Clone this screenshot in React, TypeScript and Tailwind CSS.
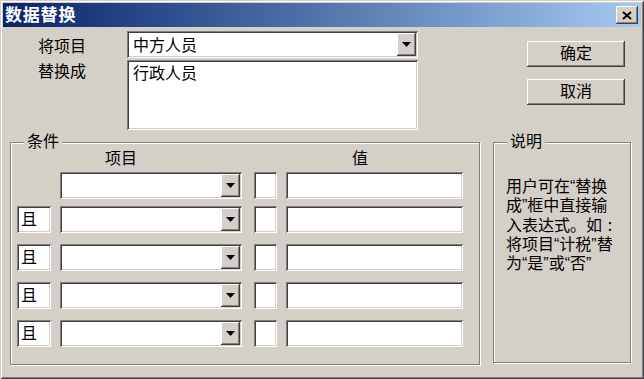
const sunken =
  'bg-white shadow-[inset_1px_1px_#808080,inset_-1px_-1px_#ffffff,inset_2px_2px_#404040,inset_-2px_-2px_#d4d0c8]'
const raised =
  'bg-[#d4d0c8] shadow-[inset_-1px_-1px_#404040,inset_1px_1px_#ffffff,inset_-2px_-2px_#808080,inset_2px_2px_#d4d0c8]'

function DropButton() {
  return (
    <div className={`${raised} w-[19px] h-full flex items-center justify-center`}>
      <svg width="9" height="5" viewBox="0 0 9 5">
        <path d="M0 0h9L4.5 5z" fill="#000" />
      </svg>
    </div>
  )
}

function Combo({ value = '', width }: { value?: string; width: string }) {
  return (
    <div className={`${sunken} ${width} flex h-[27px] p-[2px]`}>
      <div className="flex-1 flex items-center pl-[4px] pt-[2px] text-[16px] leading-none">{value}</div>
      <DropButton />
    </div>
  )
}

function GroupBox({ title, className, children }: { title: string; className: string; children?: React.ReactNode }) {
  return (
    <div className={`relative border border-[#808080] shadow-[inset_1px_1px_#ffffff,1px_1px_#ffffff] ${className}`}>
      <span className="absolute -top-[10px] left-[13px] bg-[#d4d0c8] px-[3px] text-[16px] leading-[18px]">{title}</span>
      {children}
    </div>
  )
}

function ConditionRow({ first = false, className = '' }: { first?: boolean; className?: string }) {
  return (
    <div className={`flex h-[27px] ${className}`}>
      {first ? (
        <div className="ml-[6px] w-[34px]" />
      ) : (
        <div className={`${sunken} ml-[6px] w-[34px] flex items-center pl-[4px] text-[16px] leading-none`}>且</div>
      )}
      <div className="ml-[9px]">
        <Combo width="w-[182px]" />
      </div>
      <div className={`${sunken} ml-[12px] w-[23px]`} />
      <div className={`${sunken} ml-[9px] w-[177px]`} />
    </div>
  )
}

export default function App() {
  return (
    <div className="w-[644px] h-[379px] bg-[#d4d0c8] p-[3px] flex flex-col text-black font-['Liberation_Sans','Noto_Sans_CJK_SC',sans-serif] shadow-[inset_1px_1px_#d4d0c8,inset_-1px_-1px_#404040,inset_2px_2px_#ffffff,inset_-2px_-2px_#808080]">
      {/* title bar */}
      <div className="h-[24px] flex items-center bg-linear-to-r from-[#0a246a] to-[#a6caf0]">
        <span className="pl-[2px] text-white font-bold text-[17px] tracking-[0.8px] leading-none">数据替换</span>
        <div className={`${raised} ml-auto mr-[3px] w-[22px] h-[18px] flex items-center justify-center`}>
          <svg width="10" height="9" viewBox="0 0 10 9">
            <path d="M1 1l8 7M9 1L1 8" stroke="#000" strokeWidth="2" />
          </svg>
        </div>
      </div>

      {/* top fields */}
      <div className="flex pt-[4px]">
        <div className="ml-[35px] w-[89px] text-[16px] leading-[18px]">
          <div className="h-[27px] flex items-center pt-[4px]">将项目</div>
          <div className="mt-[5px]">替换成</div>
        </div>
        <div className="w-[291px]">
          <Combo value="中方人员" width="w-[291px]" />
          <div className={`${sunken} mt-[2px] h-[70px] pt-[5px] pl-[6px] text-[16px] leading-[18px]`}>行政人员</div>
        </div>
        <div className="ml-[109px] mt-[10px] w-[98px] flex flex-col gap-[12px]">
          <div className={`${raised} h-[26px] flex items-center justify-center text-[16px] leading-none`}>确定</div>
          <div className={`${raised} h-[26px] flex items-center justify-center text-[16px] leading-none`}>取消</div>
        </div>
      </div>

      {/* group boxes */}
      <div className="flex mt-[12px] ml-[7px]">
        <GroupBox title="条件" className="w-[470px] h-[223px]">
          <div className="flex mt-[7px] text-[16px] leading-[18px]">
            <span className="ml-[94px]">项目</span>
            <span className="ml-[215px]">值</span>
          </div>
          <ConditionRow first className="mt-[4px]" />
          <ConditionRow className="mt-[7px]" />
          <ConditionRow className="mt-[11px]" />
          <ConditionRow className="mt-[11px]" />
          <ConditionRow className="mt-[11px]" />
        </GroupBox>
        <GroupBox title="说明" className="ml-[13px] w-[138px] h-[221px]">
          <div className="pt-[34px] pl-[12px] text-[16px] leading-[19px] whitespace-nowrap">
            <div>用户可在“替换</div>
            <div>成”框中直接输</div>
            <div>
              入表达式。如<span className="font-['Noto_Sans_CJK_SC',sans-serif] inline-block w-[16px] text-center">:</span>
            </div>
            <div>将项目“计税”替</div>
            <div>为“是”或“否”</div>
          </div>
        </GroupBox>
      </div>
    </div>
  )
}
